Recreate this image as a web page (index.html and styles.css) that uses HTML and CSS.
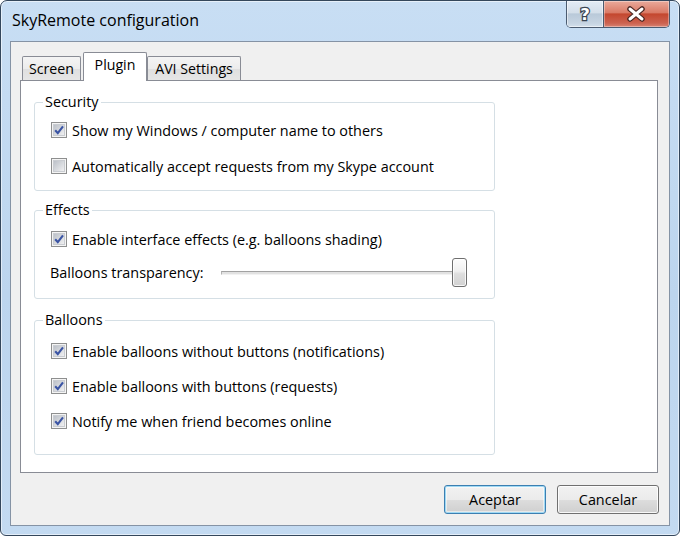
FILE: index.html
```html
<!DOCTYPE html>
<html>
<head>
<meta charset="utf-8">
<title>SkyRemote configuration</title>
<link rel="stylesheet" href="styles.css">
</head>
<body>
<svg class="defs" width="0" height="0" aria-hidden="true">
  <defs>
    <linearGradient id="cbInner" x1="0" y1="0" x2="1" y2="1">
      <stop offset="0" stop-color="#b9bec6"/>
      <stop offset="1" stop-color="#f2f2f3"/>
    </linearGradient>
  </defs>
</svg>
<div class="window">
  <div class="titlebar">
    <span class="title">SkyRemote configuration</span>
    <div class="caption-buttons">
      <div class="cbtn help">
        <svg width="37" height="26" viewBox="0 0 37 26"><text x="18.5" y="19.5" text-anchor="middle" class="qmark">?</text></svg>
      </div>
      <div class="cbtn close">
        <svg width="65" height="26" viewBox="0 0 65 26">
          <path d="M26 8 L38 18 M38 8 L26 18" stroke="#4a2622" stroke-width="5.5" stroke-linecap="round" fill="none"/>
          <path d="M26 8 L38 18 M38 8 L26 18" stroke="#ffffff" stroke-width="3" stroke-linecap="round" fill="none"/>
        </svg>
      </div>
    </div>
  </div>
  <div class="client">
    <div class="tabs">
      <div class="tab t-screen">Screen</div>
      <div class="tab active t-plugin">Plugin</div>
      <div class="tab t-avi">AVI Settings</div>
    </div>
    <div class="panel">
      <fieldset class="group g-security">
        <legend>Security</legend>
        <div class="check">
          <svg class="cb" width="16" height="16" viewBox="0 0 16 16"><rect x="0.5" y="0.5" width="15" height="15" fill="#f4f4f4" stroke="#8e8f8f"/><rect x="2.5" y="2.5" width="11" height="11" fill="url(#cbInner)" stroke="#c9ccd1"/><path d="M4.2 8.2 L6.8 11.2 L12 4.3" stroke="#3a54a4" stroke-width="2.1" fill="none"/></svg>
          <span>Show my Windows / computer name to others</span>
        </div>
        <div class="check">
          <svg class="cb" width="16" height="16" viewBox="0 0 16 16"><rect x="0.5" y="0.5" width="15" height="15" fill="#f4f4f4" stroke="#8e8f8f"/><rect x="2.5" y="2.5" width="11" height="11" fill="url(#cbInner)" stroke="#c9ccd1"/></svg>
          <span>Automatically accept requests from my Skype account</span>
        </div>
      </fieldset>
      <fieldset class="group g-effects">
        <legend>Effects</legend>
        <div class="check">
          <svg class="cb" width="16" height="16" viewBox="0 0 16 16"><rect x="0.5" y="0.5" width="15" height="15" fill="#f4f4f4" stroke="#8e8f8f"/><rect x="2.5" y="2.5" width="11" height="11" fill="url(#cbInner)" stroke="#c9ccd1"/><path d="M4.2 8.2 L6.8 11.2 L12 4.3" stroke="#3a54a4" stroke-width="2.1" fill="none"/></svg>
          <span>Enable interface effects (e.g. balloons shading)</span>
        </div>
        <div class="slider-row">
          <span class="slider-label">Balloons transparency:</span>
          <div class="slider">
            <div class="track"></div>
            <div class="thumb"></div>
          </div>
        </div>
      </fieldset>
      <fieldset class="group g-balloons">
        <legend>Balloons</legend>
        <div class="check">
          <svg class="cb" width="16" height="16" viewBox="0 0 16 16"><rect x="0.5" y="0.5" width="15" height="15" fill="#f4f4f4" stroke="#8e8f8f"/><rect x="2.5" y="2.5" width="11" height="11" fill="url(#cbInner)" stroke="#c9ccd1"/><path d="M4.2 8.2 L6.8 11.2 L12 4.3" stroke="#3a54a4" stroke-width="2.1" fill="none"/></svg>
          <span>Enable balloons without buttons (notifications)</span>
        </div>
        <div class="check">
          <svg class="cb" width="16" height="16" viewBox="0 0 16 16"><rect x="0.5" y="0.5" width="15" height="15" fill="#f4f4f4" stroke="#8e8f8f"/><rect x="2.5" y="2.5" width="11" height="11" fill="url(#cbInner)" stroke="#c9ccd1"/><path d="M4.2 8.2 L6.8 11.2 L12 4.3" stroke="#3a54a4" stroke-width="2.1" fill="none"/></svg>
          <span>Enable balloons with buttons (requests)</span>
        </div>
        <div class="check">
          <svg class="cb" width="16" height="16" viewBox="0 0 16 16"><rect x="0.5" y="0.5" width="15" height="15" fill="#f4f4f4" stroke="#8e8f8f"/><rect x="2.5" y="2.5" width="11" height="11" fill="url(#cbInner)" stroke="#c9ccd1"/><path d="M4.2 8.2 L6.8 11.2 L12 4.3" stroke="#3a54a4" stroke-width="2.1" fill="none"/></svg>
          <span>Notify me when friend becomes online</span>
        </div>
      </fieldset>
    </div>
    <div class="buttons">
      <div class="btn default">Aceptar</div>
      <div class="btn">Cancelar</div>
    </div>
  </div>
</div>
</body>
</html>
```
FILE: styles.css
```css
* { box-sizing: border-box; }
html, body { margin: 0; padding: 0; }
body {
  width: 680px;
  height: 536px;
  overflow: hidden;
  background: #ffffff;
  font-family: "Open Sans", "Noto Sans", sans-serif;
  color: #000;
}
.defs { display: block; width: 0; height: 0; overflow: hidden; }

.window {
  width: 680px;
  height: 536px;
  border: 1px solid #34475c;
  border-radius: 7px 7px 6px 6px;
  background: linear-gradient(#c8def4, #bcd5ee 55%, #c3daf1);
  box-shadow: inset 0 0 0 1px rgba(255,255,255,0.55);
  padding: 0 9px 9px;
  display: flex;
  flex-direction: column;
}

.titlebar {
  height: 40px;
  flex: none;
  display: flex;
  align-items: flex-start;
}
.title {
  font-size: 16px;
  line-height: 22px;
  margin: 8px 0 0 2px;
  color: #000;
}
.caption-buttons {
  margin-left: auto;
  display: flex;
  height: 27px;
  border: 1px solid #4b5b70;
  border-top: none;
  border-radius: 0 0 5px 5px;
  overflow: hidden;
}
.cbtn { height: 26px; display: flex; }
.help {
  width: 37px;
  border-right: 1px solid #4b5b70;
  background: linear-gradient(#e4ecf5, #d3dee9 45%, #b9c9d9 50%, #c6d4e2 85%, #d4e0ec);
  box-shadow: inset 0 0 0 1px rgba(255,255,255,0.5);
}
.close {
  width: 65px;
  background: linear-gradient(#eaaa9b, #d97a66 45%, #c4472f 50%, #cc6250 85%, #d98474);
  box-shadow: inset 0 0 0 1px rgba(255,255,255,0.35);
}
.qmark {
  font-family: "DejaVu Sans", sans-serif;
  font-weight: bold;
  font-size: 17px;
  fill: #ffffff;
  stroke: #3a4553;
  stroke-width: 2.6px;
  paint-order: stroke;
}

.client {
  flex: 1;
  background: #f0f0f0;
  border: 1px solid #8593a5;
  padding: 10px 11px 0 9px;
  display: flex;
  flex-direction: column;
}

.tabs {
  height: 28px;
  flex: none;
  display: flex;
  align-items: flex-end;
  padding-left: 2px;
}
.tab {
  height: 24px;
  border: 1px solid #898c95;
  border-bottom: none;
  border-radius: 2px 2px 0 0;
  background: linear-gradient(#f4f4f4, #ececec 50%, #dfdfdf 51%, #e6e6e6);
  font-size: 14.2px;
  line-height: 20px;
  display: flex;
  align-items: center;
  justify-content: center;
  white-space: nowrap;
}
.t-screen { width: 59px; }
.t-avi { width: 94px; }
.tab.active {
  width: 64px;
  height: 29px;
  margin-left: 2px;
  margin-bottom: -1px;
  background: #ffffff;
  position: relative;
  z-index: 1;
  align-items: flex-start;
  padding-top: 2px;
}

.panel {
  height: 393px;
  flex: none;
  background: #ffffff;
  border: 1px solid #898c95;
  padding: 11px 0 0 13px;
}

.group {
  width: 461px;
  margin: 0;
  border: 1px solid #d5dfe5;
  border-radius: 3px;
  padding: 6px 16px 12px;
  display: flex;
  flex-direction: column;
  gap: 12px;
  min-inline-size: 0;
}
.group legend {
  font-size: 14.4px;
  line-height: 20px;
  padding: 0 2px;
  margin-left: -8px;
}
.g-effects { margin-top: 9px; padding-top: 7px; padding-bottom: 11px; gap: 7px; }
.g-balloons { margin-top: 11px; padding-top: 9px; padding-bottom: 21px; gap: 11px; }

.check {
  height: 24px;
  display: flex;
  align-items: center;
  font-size: 14.4px;
  white-space: nowrap;
}
.cb { flex: none; margin-right: 5px; }

.slider-row {
  height: 29px;
  display: flex;
  align-items: center;
  font-size: 14.4px;
}
.slider-label { width: 171px; margin-left: -1px; flex: none; white-space: nowrap; }
.slider { width: 246px; display: flex; align-items: center; }
.track {
  flex: 1;
  height: 4px;
  border-top: 1px solid #a2a2a2;
  border-left: 1px solid #b4b4b4;
  border-bottom: 1px solid #f2f2f2;
  background: #e2e2e2;
}
.thumb {
  width: 15px;
  height: 29px;
  margin-left: -5px;
  border: 1px solid #6f6f6f;
  border-radius: 3px;
  background: linear-gradient(#fdfdfd, #f0f0f0 45%, #dedede 55%, #d2d2d2);
  box-shadow: inset 0 0 0 1px rgba(255,255,255,0.8);
}

.buttons {
  display: flex;
  justify-content: flex-end;
  gap: 11px;
  margin-top: 12px;
  margin-right: -1px;
}
.btn {
  width: 102px;
  height: 29px;
  border: 1px solid #707070;
  border-radius: 3px;
  background: linear-gradient(#f2f2f2, #ebebeb 50%, #dddddd 51%, #cfcfcf);
  box-shadow: inset 0 0 0 1px rgba(255,255,255,0.85);
  font-size: 14.4px;
  display: flex;
  align-items: center;
  justify-content: center;
}
.btn.default {
  border-color: #3c7fb1;
  box-shadow: inset 0 0 0 1px #9fd9f4, inset 0 0 0 2px rgba(255,255,255,0.5);
}
```
